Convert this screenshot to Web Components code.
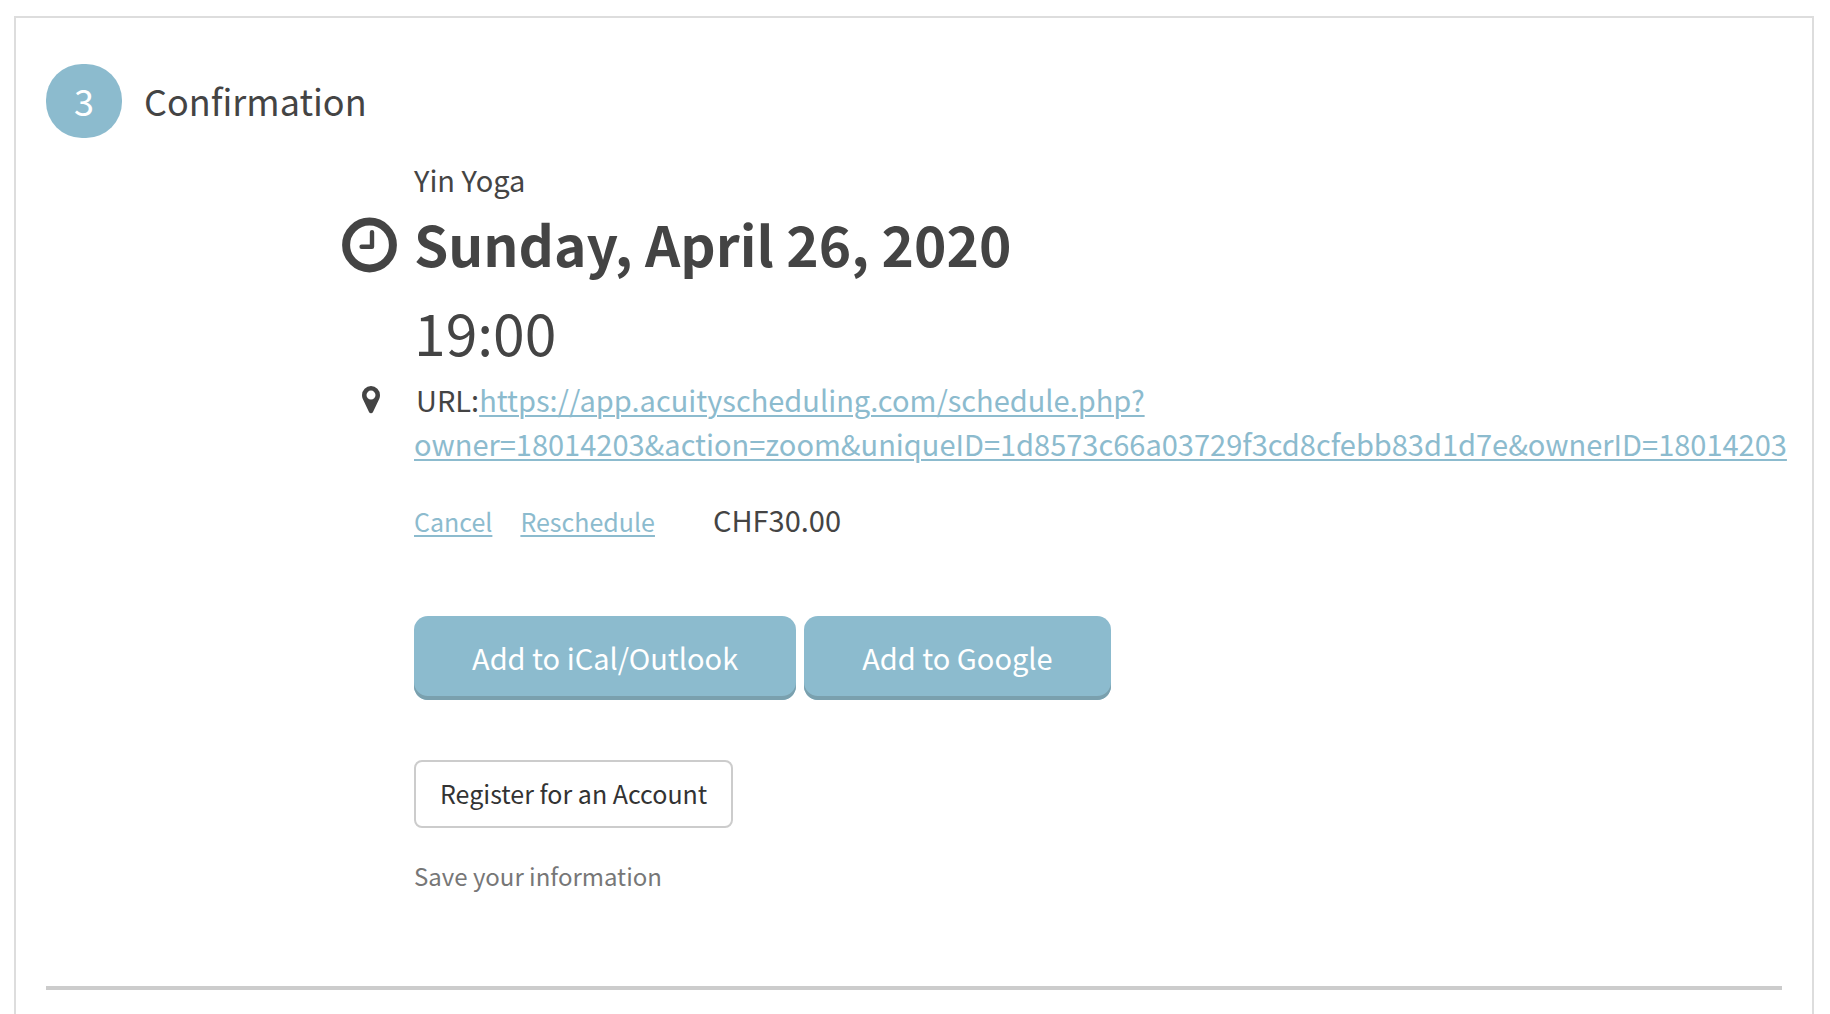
<!DOCTYPE html>
<html lang="en">
<head>
<meta charset="utf-8">
<title>Confirmation</title>
<style>
  :root { --accent: #8cbbce; --accent-dark: #7aa0ae; --ink: #444; }
  * { box-sizing: border-box; }
  body {
    margin: 0; min-height: 100vh; padding: 16px 16px 0 14px; display: flex; flex-direction: column;
    background: #fff; color: var(--ink);
    font-family: "Noto Sans CJK SC", "Noto Sans", sans-serif; font-size: 29px; line-height: 44px;
  }
  confirmation-page { flex: 1; }
</style>
</head>
<body>
<confirmation-page></confirmation-page>
<script>
const define = (name, html) => {
  const template = document.createElement('template');
  template.innerHTML = '<style>*{box-sizing:border-box}:host([hidden]){display:none}</style>' + html.trim();
  customElements.define(name, class extends HTMLElement {
    constructor() {
      super();
      this.attachShadow({ mode: 'open' }).append(template.content.cloneNode(true));
    }
  });
};

define('step-header', `
  <style>
    :host { display: flex; align-items: center; gap: 22px; }
    .num { width: 76px; height: 74px; border-radius: 36px; background: var(--accent); color: #fff;
      display: flex; align-items: center; justify-content: center; }
    .num, h1 { margin: 0; padding-bottom: 2px; font-size: 36px; line-height: 52px; font-weight: 400; }
  </style>
  <span class="num"><slot name="number"></slot></span><h1><slot></slot></h1>`);

define('clock-icon', `
  <style>:host { display: block; } svg { display: block; overflow: visible; }</style>
  <svg width="56" height="56" viewBox="0 0 56 56" fill="none" stroke="currentColor" aria-hidden="true">
    <circle cx="27.5" cy="30" r="23.4" stroke-width="8"/>
    <path d="M30 17.300v14.400H19.600" stroke-width="4.400" stroke-linejoin="round" stroke-linecap="round"/>
  </svg>`);

define('pin-icon', `
  <style>:host { display: block; } svg { display: block; }</style>
  <svg width="20" height="32" viewBox="-2 -3 20 32" fill="currentColor" aria-hidden="true">
    <path fill-rule="evenodd" d="M9 0a9 9 0 0 1 9 9c0 1.500-.2 2.600-.7 3.700L11 26a2.200 2.200 0 0 1-4 0L.7 12.700C.2 11.600 0 10.500 0 9a9 9 0 0 1 9-9zm0 4.600a4.500 4.500 0 1 0 0 9 4.500 4.500 0 0 0 0-9z"/>
  </svg>`);

define('detail-row', `
  <style>
    :host { display: grid; grid-template-columns: 56px minmax(0, 1fr); column-gap: 16px; }
    .icon { display: flex; justify-content: center; align-items: center; height: 1lh; }
    .text { min-width: 0; }
  </style>
  <span class="icon"><slot name="icon"></slot></span><div class="text"><slot></slot></div>`);

define('text-link', `<style>
    :host { display: inline; }
    a { color: var(--accent); text-decoration: underline; text-decoration-thickness: 2px;
      text-underline-offset: 3px; }
  </style><a href="#"><slot></slot></a>`);

define('action-button', `
  <style>
    :host { display: block; }
    button { display: block; margin: 0; border: 0; border-radius: 14px; padding: 19px 58px 21px;
      background: var(--accent); color: #fff; box-shadow: inset 0 -4px var(--accent-dark);
      font: inherit; cursor: pointer; }
    :host([outline]) button { padding: 11px 24px 13px; border: 2px solid #ccc; border-radius: 8px;
      background: #fff; color: #333; box-shadow: none; font-size: 25px; line-height: 40px; }
  </style>
  <button type="button"><slot></slot></button>`);

define('confirmation-page', `
  <style>
    :host { display: block; border: 2px solid #ddd; border-bottom: 0; padding: 46px 30px 24px; }
    .details { padding: 19px 0 0 296px; }
    h2, p { margin: 0; font-weight: 400; }
    .date { font-size: 55px; line-height: 84px; }
    .date h2 { font-size: 55px; font-weight: 700; }
    .time { font-size: 57px; line-height: 92px; }
    .place p { text-indent: 2px; }
    .links { margin-top: 32px; display: flex; align-items: baseline; }
    .links text-link { font-size: 25px; margin-right: 28px; }
    .links .price { margin-left: 30px; }
    .buttons { margin-top: 73px; display: flex; flex-wrap: wrap; gap: 8px; }
    .register { margin-top: 60px; display: flex; }
    .note { margin-top: 28px; font-size: 24px; line-height: 40px; color: #777; }
    hr { margin: 90px 0 0; border: 0; height: 4px; background: #ccc; }
  </style>
  <step-header><span slot="number">3</span>Confirmation</step-header>
  <section class="details">
    <detail-row><p>Yin Yoga</p></detail-row>
    <detail-row class="date"><clock-icon slot="icon"></clock-icon><h2>Sunday, April 26, 2020</h2></detail-row>
    <detail-row class="time"><p>19:00</p></detail-row>
    <detail-row class="place"><pin-icon slot="icon"></pin-icon><p>URL:<text-link>https://app.acuityscheduling.com/schedule.php?<wbr>owner=18014203&amp;action=zoom&amp;uniqueID=1d8573c66a03729f3cd8cfebb83d1d7e&amp;ownerID=18014203</text-link></p></detail-row>
    <detail-row>
      <div class="links"><text-link>Cancel</text-link><text-link>Reschedule</text-link><span class="price">CHF30.00</span></div>
      <div class="buttons"><action-button>Add to iCal/Outlook</action-button><action-button>Add to Google</action-button></div>
      <div class="register"><action-button outline>Register for an Account</action-button></div>
      <p class="note">Save your information</p>
    </detail-row>
  </section>
  <hr>`);
</script>
</body>
</html>
